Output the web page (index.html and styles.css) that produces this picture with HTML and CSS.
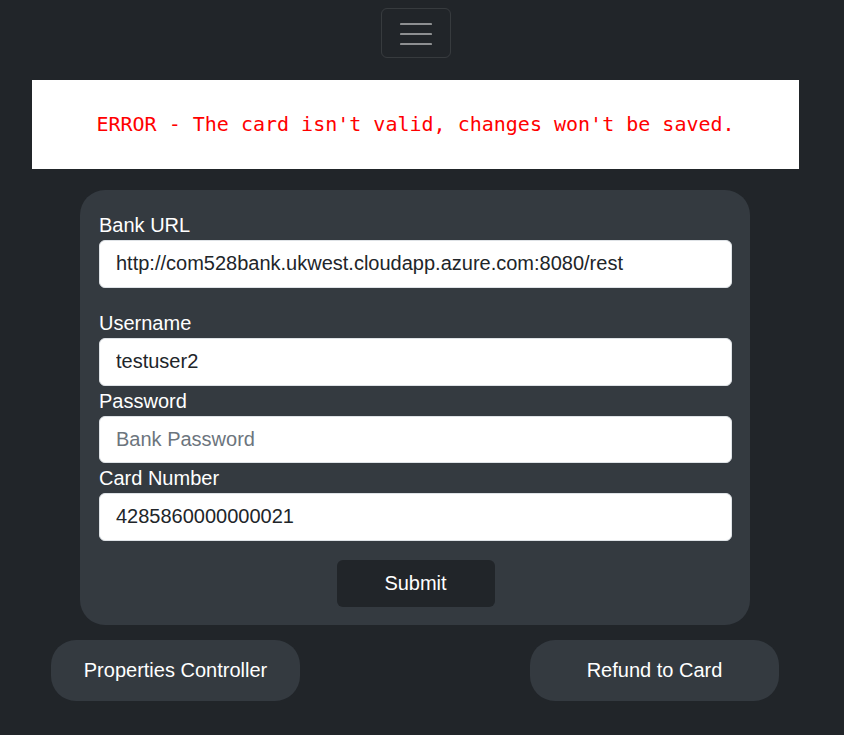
FILE: index.html
```html
<!DOCTYPE html>
<html lang="en">
<head>
<meta charset="utf-8">
<title>Card Settings</title>
<link rel="stylesheet" href="styles.css">
</head>
<body>
<div class="page">
  <header class="topbar">
    <button class="toggler" aria-label="Toggle navigation">
      <svg width="32" height="24" viewBox="0 0 32 24"><path d="M1 3H31M1 13H31M1 23H31" stroke="#8d8f91" stroke-width="2.2" stroke-linecap="round" fill="none"/></svg>
    </button>
  </header>
  <div class="alert">ERROR - The card isn't valid, changes won't be saved.</div>
  <form class="card">
    <div class="group group-first">
      <label class="label">Bank URL</label>
      <input class="input" type="text" value="http://com528bank.ukwest.cloudapp.azure.com:8080/rest">
    </div>
    <div class="group">
      <label class="label">Username</label>
      <input class="input" type="text" value="testuser2">
    </div>
    <div class="group">
      <label class="label">Password</label>
      <input class="input" type="password" placeholder="Bank Password">
    </div>
    <div class="group">
      <label class="label">Card Number</label>
      <input class="input" type="text" value="4285860000000021">
    </div>
    <div class="actions">
      <button type="button" class="submit">Submit</button>
    </div>
  </form>
  <div class="nav-buttons">
    <button class="pill">Properties Controller</button>
    <button class="pill">Refund to Card</button>
  </div>
</div>
</body>
</html>
```
FILE: styles.css
```css
html, body {
  margin: 0;
  padding: 0;
  background: #212529;
  font-family: "Liberation Sans", Arial, sans-serif;
  color: #fff;
}
.page {
  width: 830px;
  display: flex;
  flex-direction: column;
  align-items: center;
}
.topbar {
  padding-top: 8px;
  height: 50px;
  display: flex;
  justify-content: center;
}
.toggler {
  width: 70px;
  height: 50px;
  box-sizing: border-box;
  background: transparent;
  border: 1px solid rgba(255,255,255,0.1);
  border-radius: 6px;
  display: flex;
  align-items: center;
  justify-content: center;
  padding: 0;
  margin-left: 1px;
}
.alert {
  margin-top: 22px;
  width: 767px;
  height: 89px;
  padding-bottom: 2px;
  box-sizing: border-box;
  background: #fff;
  color: #ff0000;
  font-family: "DejaVu Sans Mono", "Liberation Mono", monospace;
  font-size: 20px;
  display: flex;
  align-items: center;
  justify-content: center;
  margin-left: 1px;
}
.card {
  margin-top: 21px;
  width: 670px;
  box-sizing: border-box;
  background: #343a40;
  border-radius: 25px;
  padding: 20px 18px 18px 19px;
  display: flex;
  flex-direction: column;
}
.group {
  display: flex;
  flex-direction: column;
}
.group-first {
  margin-bottom: 20.5px;
}
.label {
  font-size: 20px;
  line-height: 30px;
  color: #fff;
}
.input {
  height: 47.5px;
  box-sizing: border-box;
  border: 1px solid #dee2e6;
  border-radius: 6px;
  padding: 0 16px;
  font-family: "Liberation Sans", Arial, sans-serif;
  font-size: 20px;
  color: #212529;
  background: #fff;
  outline: none;
}
.input::placeholder {
  color: #6c757d;
}
.actions {
  display: flex;
  justify-content: center;
  margin-top: 19.5px;
}
.submit {
  width: 158px;
  height: 47px;
  border: none;
  border-radius: 6px;
  background: #212529;
  color: #fff;
  font-family: "Liberation Sans", Arial, sans-serif;
  font-size: 20px;
}
.nav-buttons {
  margin-top: 15px;
  width: 728px;
  display: flex;
  justify-content: space-between;
}
.pill {
  width: 249px;
  height: 61px;
  border: none;
  border-radius: 25px;
  background: #343a40;
  color: #fff;
  font-family: "Liberation Sans", Arial, sans-serif;
  font-size: 20px;
}
```
